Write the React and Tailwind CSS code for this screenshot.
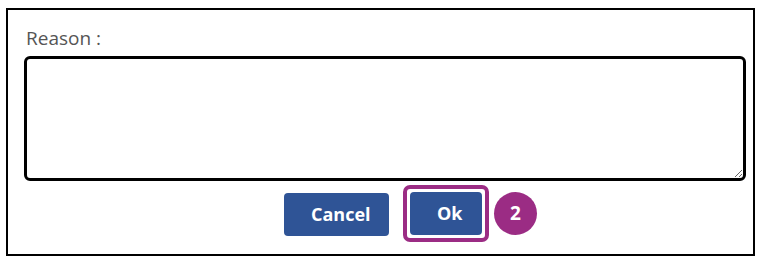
export default function App() {
  return (
    <div className="w-[763px] h-[262px] bg-white pt-[8px] pl-[6px]" style={{ fontFamily: '"Open Sans", sans-serif' }}>
      <div className="w-[749px] h-[248px] border-2 border-black flex flex-col">
        <label className="ml-[18px] mt-[16px] text-[19px] leading-[25px] text-[#555]">Reason :</label>
        <textarea className="ml-[16px] mt-[5px] w-[722px] h-[125px] border-[3px] border-black rounded-[6px] outline-none p-2" />
        <div className="flex items-center ml-[276px] mt-[4px]">
          <button className="h-[43px] w-[105px] mt-[1px] rounded-[4px] bg-[#2f5496] text-white font-bold text-[18px] pl-[27px] pr-[10px] text-left">
            Cancel
          </button>
          <div className="ml-[14px] p-[3px] border-[4px] border-[#9b2c84] rounded-[7px]">
            <div className="h-[43px] w-[72px] rounded-[4px] bg-[#2f5496] text-white font-bold text-[18px] flex items-center pl-[27px]">
              Ok
            </div>
          </div>
          <div className="ml-[5px] w-[43px] h-[43px] rounded-full bg-[#9b2c84] text-white font-bold text-[19px] flex items-center justify-center">
            2
          </div>
        </div>
      </div>
    </div>
  );
}
